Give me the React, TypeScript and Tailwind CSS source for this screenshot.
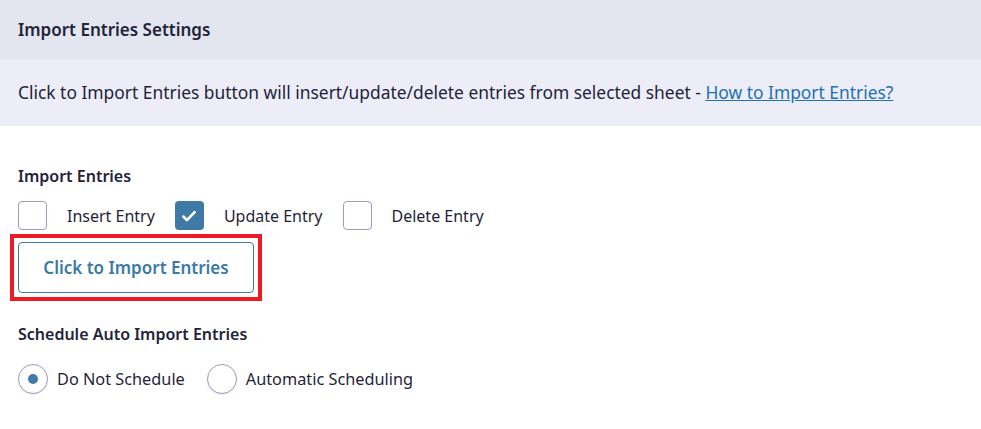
import React from "react";

function Check({ checked, label }: { checked?: boolean; label: string }) {
  return (
    <label className="flex items-center">
      {checked ? (
        <span className="flex h-[29px] w-[29px] items-center justify-center rounded-[4px] bg-[#3e7aa5]">
          <svg width="18" height="18" viewBox="0 0 16 16" fill="none">
            <path d="M3 8.5l3.2 3.2L13 4.6" stroke="#fff" strokeWidth="2.4" strokeLinecap="round" strokeLinejoin="round" />
          </svg>
        </span>
      ) : (
        <span className="h-[29px] w-[29px] rounded-[4px] border border-[#9a9cc0] bg-white" />
      )}
      <span className="ml-[20px] text-[16px] text-[#1f1f3a]">{label}</span>
    </label>
  );
}

function Radio({ checked, label }: { checked?: boolean; label: string }) {
  return (
    <label className="flex items-center">
      <span className="flex h-[30px] w-[30px] items-center justify-center rounded-full border border-[#9a9cc0] bg-white shadow-[0_1px_2px_rgba(0,0,0,0.08)]">
        {checked && <span className="h-[10px] w-[10px] rounded-full bg-[#3e7aa5]" />}
      </span>
      <span className="ml-[9px] text-[16.3px] text-[#1f1f3a]">{label}</span>
    </label>
  );
}

export default function App() {
  return (
    <div className="h-[429px] w-[981px] bg-white" style={{ fontFamily: '"Noto Sans", "Open Sans", sans-serif' }}>
      <div className="flex h-[59px] items-center bg-[#e3e5ef] px-[18px]">
        <h2 className="text-[17px] font-semibold text-[#23233a]">Import Entries Settings</h2>
      </div>
      <div className="flex h-[67px] items-center bg-[#ecedf7] px-[18px]">
        <p className="text-[17.4px] text-[#1f1f3a]">
          Click to Import Entries button will insert/update/delete entries from selected sheet -{" "}
          <a href="#" className="text-[#2271b1] underline">How to Import Entries?</a>
        </p>
      </div>
      <div className="px-[18px] pt-[38px]">
        <div className="text-[16px] font-semibold text-[#23233a]">Import Entries</div>
        <div className="mt-[13px] flex items-center gap-[20px]">
          <Check label="Insert Entry" />
          <Check checked label="Update Entry" />
          <Check label="Delete Entry" />
        </div>
        <div className="-ml-[8px] mt-[4px] inline-block border-4 border-[#ed1c24] p-[4px]">
          <button className="flex h-[51px] w-[236px] items-center justify-center rounded-[4px] border border-[#3b7db0] bg-white text-[17px] font-semibold text-[#3a7aa6]">
            Click to Import Entries
          </button>
        </div>
        <div className="mt-[21px] text-[16px] font-semibold text-[#23233a]">Schedule Auto Import Entries</div>
        <div className="mt-[18px] flex items-center gap-[22px]">
          <Radio checked label="Do Not Schedule" />
          <Radio label="Automatic Scheduling" />
        </div>
      </div>
    </div>
  );
}
